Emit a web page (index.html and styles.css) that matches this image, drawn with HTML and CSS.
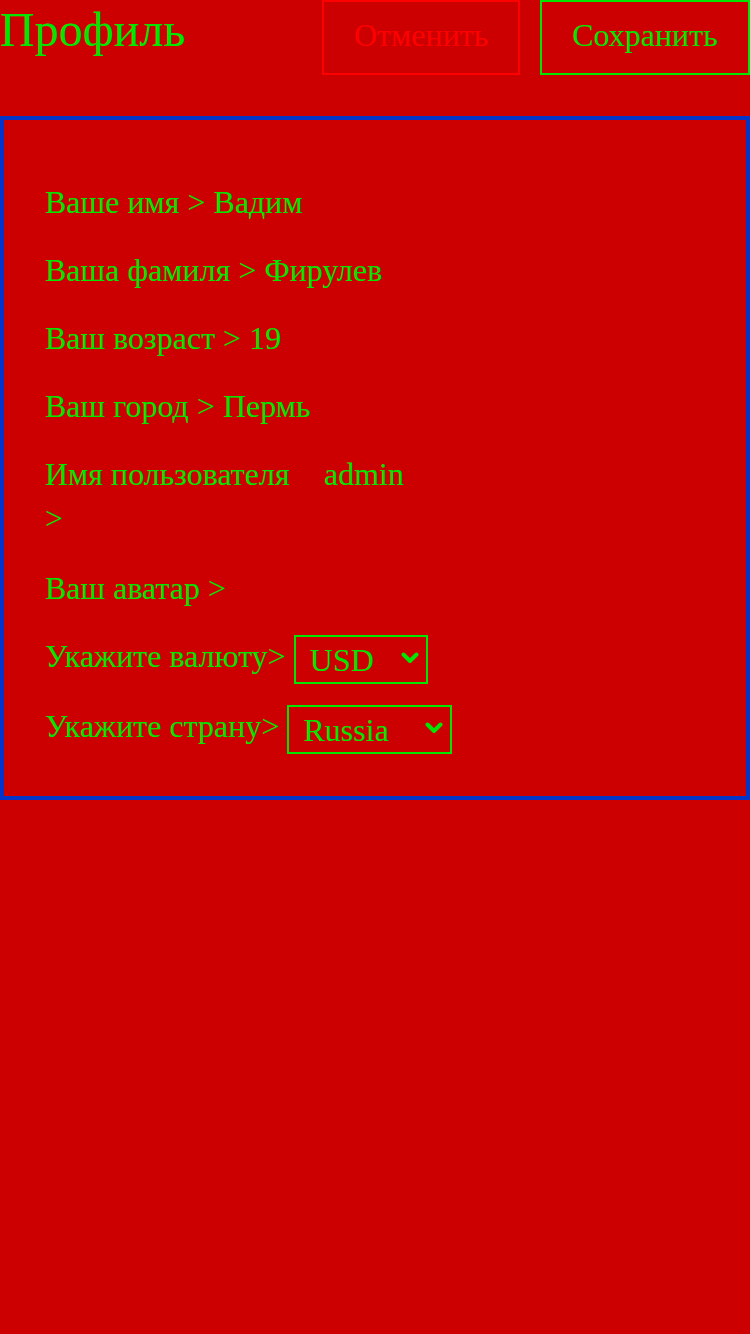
FILE: index.html
```html
<!DOCTYPE html>
<html lang="ru">
<head>
<meta charset="utf-8">
<title>Профиль</title>
<link rel="stylesheet" href="styles.css">
</head>
<body>
<header class="top">
  <h1 class="title">Профиль</h1>
  <div class="actions">
    <button class="btn btn-cancel">Отменить</button>
    <button class="btn btn-save">Сохранить</button>
  </div>
</header>
<main class="panel">
  <div class="row">Ваше имя &gt; Вадим</div>
  <div class="row">Ваша фамиля &gt; Фирулев</div>
  <div class="row">Ваш возраст &gt; 19</div>
  <div class="row">Ваш город &gt; Пермь</div>
  <div class="row row-user">
    <div class="user-label">Имя пользователя <span class="user-arrow">&gt;</span></div>
    <div class="user-value">admin</div>
  </div>
  <div class="row">Ваш аватар &gt;</div>
  <div class="row row-select">
    <span class="sel-label">Укажите валюту&gt;</span>
    <span class="sel-wrap">
      <select class="sel sel-currency">
        <option>USD</option>
        <option>EUR</option>
        <option>RUB</option>
      </select>
      <svg class="chev" width="18" height="14" viewBox="0 0 18 14" aria-hidden="true"><path d="M2.5 3.5 L9 10 L15.5 3.5" fill="none" stroke="#00e600" stroke-width="4" stroke-linecap="round" stroke-linejoin="round"/></svg>
    </span>
  </div>
  <div class="row row-select">
    <span class="sel-label">Укажите страну&gt;</span>
    <span class="sel-wrap">
      <select class="sel sel-country">
        <option>Russia</option>
        <option>USA</option>
      </select>
      <svg class="chev" width="18" height="14" viewBox="0 0 18 14" aria-hidden="true"><path d="M2.5 3.5 L9 10 L15.5 3.5" fill="none" stroke="#00e600" stroke-width="4" stroke-linecap="round" stroke-linejoin="round"/></svg>
    </span>
  </div>
</main>
</body>
</html>
```
FILE: styles.css
```css
html, body {
  margin: 0;
  padding: 0;
  background: #cc0000;
}
body {
  width: 750px;
  min-height: 1334px;
  font-family: "Liberation Serif", "Times New Roman", serif;
  color: #00e600;
}
.top {
  display: flex;
  justify-content: space-between;
  align-items: flex-start;
  height: 116px;
}
.title {
  margin: 2px 0 0 0;
  font-size: 48px;
  font-weight: normal;
  line-height: normal;
  color: #00e600;
}
.actions {
  display: flex;
  gap: 20px;
}
.btn {
  height: 75px;
  padding: 0 30px 6px;
  margin: 0;
  background: transparent;
  font-family: "Liberation Serif", "Times New Roman", serif;
  font-size: 32px;
  line-height: 36px;
  border-style: solid;
  border-width: 2px;
}
.btn-cancel {
  width: 198px;
  color: #ff0000;
  border-color: #ff0000;
}
.btn-save {
  width: 210px;
  color: #00e600;
  border-color: #00e600;
}
.panel {
  border: 4px solid #0535c8;
  padding: 64px 40px 50px 41px;
  display: flex;
  flex-direction: column;
  gap: 32px;
  font-size: 32px;
  line-height: 36px;
}
.row {
  min-height: 36px;
  white-space: nowrap;
}
.row-user {
  display: flex;
  align-items: flex-start;
  white-space: normal;
}
.user-label {
  width: 255px;
}
.user-arrow {
  display: block;
  margin-top: 8px;
  margin-bottom: 2px;
}
.user-value {
  margin-left: 24px;
}
.row-select {
  display: flex;
  align-items: flex-start;
  height: 38px;
}
.sel-wrap {
  position: relative;
  display: block;
  margin: -3px 0 0 8px;
  height: 49px;
}
.sel {
  display: block;
  -webkit-appearance: none;
  appearance: none;
  margin: 0;
  height: 49px;
  padding: 0 0 0 14px;
  border: 2px solid #00e600;
  border-radius: 0;
  background: transparent;
  color: #00e600;
  font-family: "Liberation Serif", "Times New Roman", serif;
  font-size: 32px;
  outline: none;
}
.sel-currency {
  width: 134px;
}
.sel-country {
  width: 165px;
}
.chev {
  position: absolute;
  right: 9px;
  top: 16px;
  pointer-events: none;
}
```
